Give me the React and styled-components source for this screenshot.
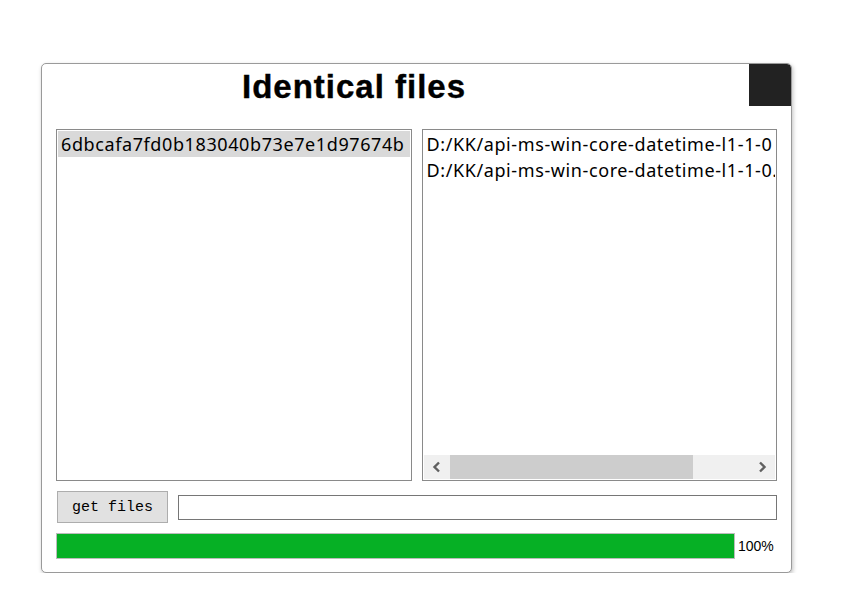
import React from 'react';
import styled, { createGlobalStyle } from 'styled-components';

const GlobalStyle = createGlobalStyle`
  * {
    box-sizing: border-box;
  }

  body {
    margin: 0;
    background: #fff;
    font-family: "Noto Sans", "Liberation Sans", sans-serif;
  }
`;

const Page = styled.div`
  padding: 63px 0 0 41px;
`;

const Card = styled.div`
  width: 751px;
  height: 510px;
  display: flex;
  flex-direction: column;
  padding: 0 14px 13px 14px;
  border: 1px solid #9a9a9a;
  border-radius: 5px;
  box-shadow: 1px 2px 4px rgba(0, 0, 0, 0.25);
  overflow: hidden;
  background: #fff;
`;

const Header = styled.div`
  height: 42px;
  display: flex;
  margin-right: -14px;
`;

const Title = styled.h1`
  flex: 1;
  margin: 0;
  padding: 4px 0 0 186px;
  line-height: 38px;
  font-family: "Liberation Sans", Arial, sans-serif;
  font-size: 33px;
  font-weight: bold;
  letter-spacing: 1px;
  color: #000;
  -webkit-text-stroke: 0.4px #000;
`;

const CloseBox = styled.div`
  width: 42px;
  height: 42px;
  background: #222;
  border-top-right-radius: 4px;
`;

const Lists = styled.div`
  margin-top: 23px;
  height: 352px;
  display: grid;
  grid-template-columns: 1fr 1fr;
  gap: 10px;
`;

const ListBox = styled.div`
  display: flex;
  flex-direction: column;
  padding: 1px;
  border: 1px solid #8a8a8a;
  overflow: hidden;
`;

const Items = styled.div`
  flex: 1;
  overflow: hidden;
`;

const Item = styled.div`
  height: 26px;
  line-height: 26px;
  padding-left: 3px;
  font-size: 18px;
  letter-spacing: 0.6px;
  white-space: nowrap;
  color: #000;
  background: ${(props) => (props.selected ? '#d9d9d9' : 'transparent')};
`;

const HScroll = styled.div`
  height: 24px;
  display: flex;
  background: #f0f0f0;
`;

const ArrowButton = styled.div`
  width: 26px;
  display: flex;
  align-items: center;
  justify-content: center;
`;

const Track = styled.div`
  flex: 1;
  display: flex;
`;

const Thumb = styled.div`
  width: 243px;
  background: #cdcdcd;
`;

const Controls = styled.div`
  margin-top: 10px;
  height: 32px;
  display: flex;
  align-items: center;
  gap: 10px;
`;

const Button = styled.button`
  width: 111px;
  height: 32px;
  margin: 0 0 0 1px;
  padding: 0;
  background: #e1e1e1;
  border: 1px solid #adadad;
  font-family: "Liberation Mono", "Courier New", monospace;
  font-size: 15px;
  color: #000;
`;

const PathInput = styled.input`
  flex: 1;
  height: 25px;
  margin: 0;
  border: 1px solid #767676;
  background: #fff;
  outline: none;
`;

const ProgressRow = styled.div`
  margin-top: 10px;
  height: 26px;
  display: flex;
  align-items: center;
  gap: 3px;
`;

const Bar = styled.div`
  flex: 1;
  height: 26px;
  border: 1px solid #bcbcbc;
  background: #e6e6e6;
`;

const Fill = styled.div`
  height: 100%;
  background: #06b025;
`;

const Percent = styled.span`
  width: 39px;
  font-family: "Liberation Sans", Arial, sans-serif;
  font-size: 14px;
  color: #000;
`;

const Chevron = ({ dir }) => (
  <svg width="10" height="12" viewBox="0 0 10 12">
    <polyline
      points={dir === 'left' ? '7,1.5 2.5,6 7,10.5' : '3,1.5 7.5,6 3,10.5'}
      fill="none"
      stroke="#606060"
      strokeWidth="2.4"
    />
  </svg>
);

const hashes = ['6dbcafa7fd0b183040b73e7e1d97674b'];

const files = [
  'D:/KK/api-ms-win-core-datetime-l1-1-0 copy.dll',
  'D:/KK/api-ms-win-core-datetime-l1-1-0.dll',
];

export default function App() {
  const progress = 100;

  return (
    <>
      <GlobalStyle />
      <Page>
        <Card>
          <Header>
            <Title>Identical files</Title>
            <CloseBox />
          </Header>

          <Lists>
            <ListBox>
              <Items>
                {hashes.map((h, i) => (
                  <Item key={h} selected={i === 0}>{h}</Item>
                ))}
              </Items>
            </ListBox>

            <ListBox>
              <Items>
                {files.map((f) => (
                  <Item key={f}>{f}</Item>
                ))}
              </Items>
              <HScroll>
                <ArrowButton><Chevron dir="left" /></ArrowButton>
                <Track>
                  <Thumb />
                </Track>
                <ArrowButton><Chevron dir="right" /></ArrowButton>
              </HScroll>
            </ListBox>
          </Lists>

          <Controls>
            <Button type="button">get files</Button>
            <PathInput type="text" />
          </Controls>

          <ProgressRow>
            <Bar>
              <Fill style={{ width: `${progress}%` }} />
            </Bar>
            <Percent>{progress}%</Percent>
          </ProgressRow>
        </Card>
      </Page>
    </>
  );
}
